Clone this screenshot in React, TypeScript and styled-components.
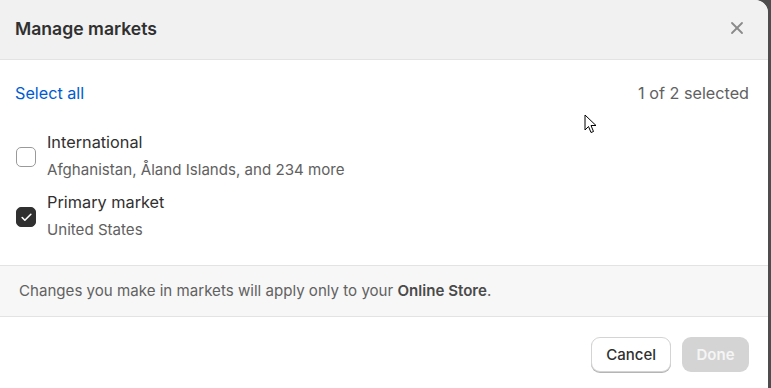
import React, { useState } from 'react';
import styled, { createGlobalStyle } from 'styled-components';
import { X, Check } from 'lucide-react';

const GlobalStyle = createGlobalStyle`
  html, body {
    margin: 0;
    padding: 0;
    background: #4d4d4d;
    font-family: Inter, "Noto Sans", "Liberation Sans", sans-serif;
    -webkit-font-smoothing: antialiased;
  }
  * { box-sizing: border-box; }
`;

const Stage = styled.div`
  position: relative;
  width: 771px;
  height: 388px;
  overflow: hidden;
`;

const Modal = styled.div`
  width: 768px;
  height: 400px;
  background: #ffffff;
  border-radius: 0 13px 13px 0;
  overflow: hidden;
  display: flex;
  flex-direction: column;
`;

const Header = styled.div`
  height: 60px;
  flex-shrink: 0;
  display: flex;
  align-items: center;
  justify-content: space-between;
  padding: 0 17px 3px 15px;
  background: #f1f1f1;
  border-bottom: 1px solid #e3e3e3;
`;

const Title = styled.h2`
  margin: 0;
  font-size: 17.6px;
  font-weight: 600;
  color: #303030;
`;

const CloseButton = styled.button`
  width: 28px;
  height: 28px;
  border: none;
  background: transparent;
  padding: 0;
  display: flex;
  align-items: center;
  justify-content: center;
  color: #8a8a8a;
  cursor: pointer;
`;

const Body = styled.div`
  padding: 23px 19px 23px 15px;
  display: flex;
  flex-direction: column;
  gap: 27px;
`;

const Toolbar = styled.div`
  display: flex;
  justify-content: space-between;
  align-items: center;
  height: 20px;
  font-size: 16.2px;
  line-height: 20px;
`;

const LinkButton = styled.button`
  border: none;
  background: none;
  padding: 0;
  font: inherit;
  color: #005bd3;
  cursor: pointer;
`;

const Count = styled.span`
  color: #616161;
`;

const List = styled.div`
  display: flex;
  flex-direction: column;
  gap: 8px;
`;

const Row = styled.label`
  display: flex;
  align-items: center;
  gap: 11px;
  padding-left: 1px;
  cursor: pointer;
`;

const Box = styled.span<{ $checked: boolean }>`
  width: 20px;
  height: 20px;
  flex-shrink: 0;
  border-radius: 5px;
  display: flex;
  align-items: center;
  justify-content: center;
  background: ${({ $checked }) => ($checked ? '#303030' : '#ffffff')};
  border: 1px solid ${({ $checked }) => ($checked ? '#303030' : '#9a9a9a')};
  color: #ffffff;
  margin-top: 2px;
`;

const RowText = styled.div`
  display: flex;
  flex-direction: column;
  gap: 4px;
`;

const RowTitle = styled.span`
  font-size: 16.3px;
  line-height: 24px;
  color: #303030;
`;

const RowSub = styled.span`
  font-size: 15.1px;
  line-height: 24px;
  color: #616161;
`;

const Notice = styled.div`
  padding: 15px 19px;
  background: #f7f7f7;
  border-top: 1px solid #e3e3e3;
  border-bottom: 1px solid #e3e3e3;
  font-size: 15.1px;
  line-height: 20px;
  color: #616161;

  strong {
    font-weight: 600;
    color: #4a4a4a;
  }
`;

const Footer = styled.div`
  display: flex;
  justify-content: flex-end;
  gap: 11px;
  padding: 20px 19px;
`;

const Button = styled.button<{ $variant: 'secondary' | 'disabled' }>`
  height: 35px;
  padding: 0 14px;
  border-radius: 9px;
  font-family: inherit;
  font-size: 15px;
  font-weight: ${({ $variant }) => ($variant === 'disabled' ? 600 : 500)};
  cursor: ${({ $variant }) => ($variant === 'disabled' ? 'default' : 'pointer')};
  ${({ $variant }) =>
    $variant === 'disabled'
      ? `
        background: #d4d4d4;
        color: #f5f5f5;
        border: none;
        min-width: 67px;
      `
      : `
        background: #ffffff;
        color: #303030;
        border: 1px solid #d4d4d4;
        box-shadow: 0 1px 0 #b5b5b5;
        min-width: 79px;
      `}
`;

const Cursor = styled.svg`
  position: absolute;
  left: 584px;
  top: 114px;
`;

interface Market {
  id: string;
  name: string;
  regions: string;
}

const markets: Market[] = [
  { id: 'intl', name: 'International', regions: 'Afghanistan, Åland Islands, and 234 more' },
  { id: 'primary', name: 'Primary market', regions: 'United States' },
];

export default function App() {
  const [selected, setSelected] = useState<string[]>(['primary']);

  const toggle = (id: string) =>
    setSelected(prev => (prev.includes(id) ? prev.filter(s => s !== id) : [...prev, id]));

  return (
    <Stage>
      <GlobalStyle />
      <Modal>
        <Header>
          <Title>Manage markets</Title>
          <CloseButton aria-label="Close">
            <X size={20} strokeWidth={2.2} />
          </CloseButton>
        </Header>
        <Body>
          <Toolbar>
            <LinkButton onClick={() => setSelected(markets.map(m => m.id))}>Select all</LinkButton>
            <Count>
              {selected.length} of {markets.length} selected
            </Count>
          </Toolbar>
          <List>
            {markets.map(m => {
              const checked = selected.includes(m.id);
              return (
                <Row key={m.id} onClick={() => toggle(m.id)}>
                  <Box $checked={checked}>{checked && <Check size={13} strokeWidth={3} />}</Box>
                  <RowText>
                    <RowTitle>{m.name}</RowTitle>
                    <RowSub>{m.regions}</RowSub>
                  </RowText>
                </Row>
              );
            })}
          </List>
        </Body>
        <Notice>
          Changes you make in markets will apply only to your <strong>Online Store</strong>.
        </Notice>
        <Footer>
          <Button $variant="secondary">Cancel</Button>
          <Button $variant="disabled" disabled>
            Done
          </Button>
        </Footer>
      </Modal>
      <Cursor width="13" height="20" viewBox="0 0 13 20">
        <path d="M1 1 L1 16 L4.5 12.5 L7 18.5 L9.5 17.5 L7 11.5 L12 11.5 Z" fill="#ffffff" stroke="#000000" strokeWidth="1" strokeLinejoin="round" />
      </Cursor>
    </Stage>
  );
}
